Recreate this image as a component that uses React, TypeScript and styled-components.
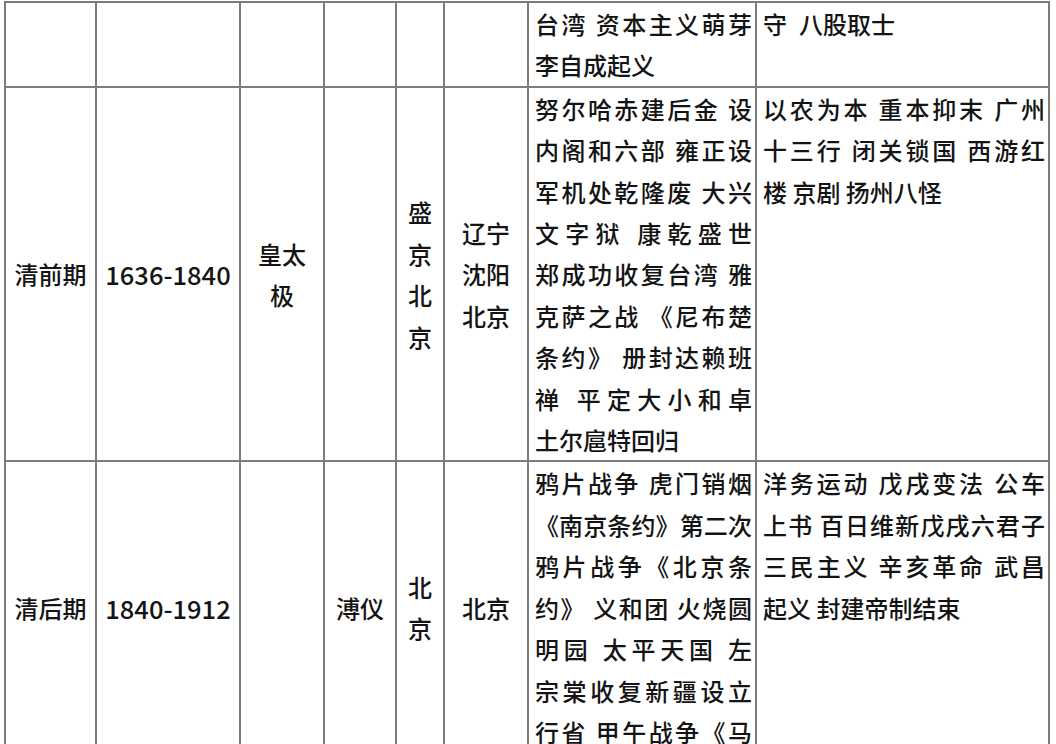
import React from 'react';
import styled, { createGlobalStyle } from 'styled-components';

const GlobalStyle = createGlobalStyle`
  html, body {
    margin: 0;
    padding: 0;
    background: #ffffff;
  }

  body {
    overflow: hidden;
    font-family: "Noto Sans CJK SC", "Noto Sans", sans-serif;
    color: #141414;
  }
`;

type Kind = 'label' | 'year' | 'text';

type CellData = {
  lines: string[];
  kind: Kind;
  open?: boolean; // text carries on past the bottom of the cell
};

const columns = [91, 144, 84, 72, 48, 84, 228, 293];

const lab = (...lines: string[]): CellData => ({ lines, kind: 'label' });
const year = (value: string): CellData => ({ lines: [value], kind: 'year' });
const txt = (lines: string[], open = false): CellData => ({ lines, kind: 'text', open });

const rows: CellData[][] = [
  [
    lab(),
    lab(),
    lab(),
    lab(),
    lab(),
    lab(),
    txt(['台湾 资本主义萌芽', '李自成起义']),
    txt(['守\u2002八股取士']),
  ],
  [
    lab('清前期'),
    year('1636-1840'),
    lab('皇太', '极'),
    lab(),
    lab('盛', '京', '北', '京'),
    lab('辽宁', '沈阳', '北京'),
    txt([
      '努尔哈赤建后金 设',
      '内阁和六部 雍正设',
      '军机处乾隆废 大兴',
      '文字狱 康乾盛世',
      '郑成功收复台湾 雅',
      '克萨之战 《尼布楚',
      '条约》 册封达赖班',
      '禅 平定大小和卓',
      '土尔扈特回归',
    ]),
    txt(['以农为本 重本抑末 广州', '十三行 闭关锁国 西游红', '楼 京剧 扬州八怪']),
  ],
  [
    lab('清后期'),
    year('1840-1912'),
    lab(),
    lab('溥仪'),
    lab('北', '京'),
    lab('北京'),
    txt(
      [
        '鸦片战争 虎门销烟',
        '《南京条约》第二次',
        '鸦片战争《北京条',
        '约》 义和团 火烧圆',
        '明园 太平天国 左',
        '宗棠收复新疆设立',
        '行省 甲午战争《马',
      ],
      true,
    ),
    txt(['洋务运动 戊戌变法 公车', '上书 百日维新戊戌六君子', '三民主义 辛亥革命 武昌', '起义 封建帝制结束']),
  ],
];

function App() {
  return (
    <>
      <GlobalStyle />
      <Table>
        {rows.map((row, r) =>
          row.map((cell, c) => (
            <Cell key={`${r}-${c}`} $kind={cell.kind}>
              {cell.lines.map((line, i) => (
                <Line
                  key={i}
                  $justify={cell.kind === 'text' && (cell.open || i < cell.lines.length - 1)}
                >
                  {line}
                </Line>
              ))}
            </Cell>
          )),
        )}
      </Table>
    </>
  );
}

const Table = styled.div`
  display: grid;
  grid-template-columns: ${columns.map(w => `${w}px`).join(' ')};
  width: max-content;
  margin: 1px 0 0 4px;
  border-top: 2px solid #7c7c7c;
  border-left: 2px solid #7c7c7c;
`;

const Cell = styled.div<{ $kind: Kind }>`
  box-sizing: border-box;
  display: flex;
  flex-direction: column;
  justify-content: ${props => (props.$kind === 'text' ? 'flex-start' : 'center')};
  padding: ${props => (props.$kind === 'text' ? '0 3px 0 6px' : '0 4px')};
  border-right: 2px solid #7c7c7c;
  border-bottom: 2px solid #7c7c7c;
  font-size: ${props => (props.$kind === 'year' ? '25.5px' : '24px')};
  font-weight: 500;
  line-height: 41.4px;
  text-align: ${props => (props.$kind === 'text' ? 'left' : 'center')};
`;

const Line = styled.div<{ $justify: boolean }>`
  text-align: ${props => (props.$justify ? 'justify' : 'inherit')};
  text-align-last: ${props => (props.$justify ? 'justify' : 'auto')};
`;

export default App;
